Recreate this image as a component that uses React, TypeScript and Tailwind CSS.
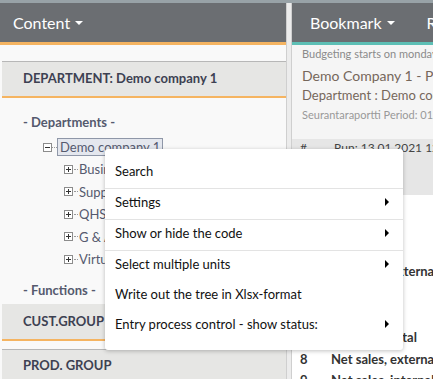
import React from "react";

const font = { fontFamily: 'Lato, "Open Sans", sans-serif' };

function Caret() {
  return <span className="inline-block ml-[5px] align-middle w-0 h-0 border-l-[4px] border-r-[4px] border-t-[4px] border-l-transparent border-r-transparent border-t-white" />;
}

function Arrow() {
  return <span className="mt-[5px] w-0 h-0 border-t-[4px] border-b-[4px] border-l-[4px] border-t-transparent border-b-transparent border-l-black" />;
}

function Box({ minus }: { minus?: boolean }) {
  return (
    <span className="relative inline-flex w-[9px] h-[9px] border border-[#8c8c8c] bg-white items-center justify-center shrink-0">
      <span className="absolute w-[5px] h-px bg-[#333]" />
      {!minus && <span className="absolute w-px h-[5px] bg-[#333]" />}
    </span>
  );
}

function Child({ label }: { label: string }) {
  return (
    <div className="flex items-center h-[22.5px] pl-[62px]">
      <Box />
      <span className="w-[4px] border-t border-dotted border-[#999] mx-[1px]" />
      <span className="text-[13px] leading-[18px] text-[#555a6e]">{label}</span>
    </div>
  );
}

function MenuItem({ label, arrow, border }: { label: string; arrow?: boolean; border?: boolean }) {
  return (
    <div className={`flex items-start justify-between ${border ? "h-[31px] border-b border-[#e3e3e3]" : "h-[30px]"} pt-[4px] pl-[10px] pr-[14px] text-[13px] leading-[18px] text-[#111]`}>
      <span>{label}</span>
      {arrow && <Arrow />}
    </div>
  );
}

export default function App() {
  return (
    <div className="relative w-[433px] h-[379px] overflow-hidden bg-[#f9f9f9]" style={font}>
      <div className="h-[3px] bg-[#98a2a7]" />
      <div className="flex h-[376px]">
        {/* left panel */}
        <div className="w-[286px] shrink-0 flex flex-col">
          <div className="h-[42px] shrink-0 bg-[#6b6e72] border-b-[3px] border-[#f5b461] flex items-center pl-[13px] text-white text-[16px]">
            Content<Caret />
          </div>
          <div className="flex-1 pt-[16px] pl-[2px]">
            <div className="h-[37px] bg-[#e6e6e4] border-t border-[#b7b7b7] border-b-2 border-b-[#f5b461] flex items-center pl-[21px] text-[13px] font-bold text-[#3d4152]">
              DEPARTMENT: Demo company 1
            </div>
            <div className="pl-[21px] pt-[15px] text-[13px] leading-[18px] font-bold text-[#555a6e] h-[38px]">- Departments -</div>
            <div className="flex items-center h-[22px] pl-[41px]">
              <Box minus />
              <span className="w-[5px] border-t border-dotted border-[#999]" />
              <span className="text-[13px] text-[#555a6e] border border-[#8f97a8] bg-[#e4e7ee] px-[2px] leading-[16px]">Demo company 1</span>
            </div>
            <Child label="Business" />
            <Child label="Supply" />
            <Child label="QHSE" />
            <Child label="G & A" />
            <Child label="Virtual" />
            <div className="pl-[21px] pt-[10px] text-[13px] leading-[18px] font-bold text-[#555a6e] h-[33.5px]">- Functions -</div>
            <div className="h-[37px] bg-[#e6e6e4] border-b-2 border-[#f5b461] flex items-center pl-[21px] text-[13px] font-bold text-[#3d4152]">
              CUST.GROUP
            </div>
            <div className="h-[8px]" />
            <div className="h-[40px] bg-[#e6e6e4] border-t border-[#b7b7b7] pt-[6px] pl-[21px] text-[13px] leading-[18px] font-bold text-[#3d4152]">
              PROD. GROUP
            </div>
          </div>
        </div>
        {/* splitter */}
        <div className="w-[6px] shrink-0 bg-[#ececec] border-l border-r border-[#cfcfcf]" />
        {/* right panel */}
        <div className="flex-1 flex flex-col min-w-0 bg-[#f5f5f5]">
          <div className="h-[42px] shrink-0 bg-[#6b6e72] border-b-[3px] border-[#5dbfb5] flex items-center pl-[18px] text-white text-[16px] whitespace-nowrap">
            Bookmark<Caret /><span className="ml-[32px]">Report</span>
          </div>
          <div className="pl-[10px] whitespace-nowrap">
            <div className="h-[19px] flex items-center text-[11px] text-[#8a8a8a]">Budgeting starts on monday</div>
            <div className="h-[22px] flex items-center text-[14px] text-[#76675b]">Demo Company 1 - Profit</div>
            <div className="h-[20px] flex items-center text-[13px] text-[#76675b]">Department : Demo company 1</div>
            <div className="h-[19px] flex items-center text-[11px] text-[#999]">Seurantaraportti Period: 01</div>
          </div>
          <div className="h-[14px] shrink-0" />
          <div className="bg-[#e6e6e6] h-[56px] shrink-0 whitespace-nowrap">
            <div className="h-[17px] flex items-center pl-[8px] text-[12px] text-[#444]">
              <span className="w-[34px] shrink-0">#</span>
              <span className="shrink-0">Run: 13.01.2021 12.50</span>
            </div>
          </div>
          <div className="bg-white flex-1 whitespace-nowrap text-[13px] text-[#333]">
            <div className="h-[22px] flex items-center pl-[39px] text-[#555]">Actual data</div>
            <div className="h-[22px] flex items-center pl-[39px] text-[#555]">Company</div>
            <div className="h-[22px]" />
            <div className="h-[22px] flex items-center pl-[39px] font-bold">Net sales, external</div>
            <div className="h-[22px]" />
            <div className="h-[22px] flex items-center pl-[39px] text-[11px] text-[#999]">Adjustments</div>
            <div className="h-[22px] flex items-center pl-[39px] font-bold">Net sales, total</div>
            <div className="h-[21px] flex items-center pl-[8px] font-bold"><span className="w-[31px] shrink-0">8</span><span className="shrink-0">Net sales, external</span></div>
            <div className="h-[22px] flex items-center pl-[8px] font-bold"><span className="w-[31px] shrink-0">9</span><span className="shrink-0">Net sales, internal</span></div>
          </div>
        </div>
      </div>
      {/* context menu */}
      <div className="absolute left-[105px] top-[149px] w-[298px] bg-white rounded-[3px] shadow-[0_1px_4px_rgba(0,0,0,0.25)] pt-[9px] pb-[9px]">
        <MenuItem label="Search" border />
        <MenuItem label="Settings" arrow border />
        <MenuItem label="Show or hide the code" arrow border />
        <MenuItem label="Select multiple units" arrow />
        <MenuItem label="Write out the tree in Xlsx-format" />
        <MenuItem label="Entry process control - show status:" arrow />
      </div>
    </div>
  );
}
